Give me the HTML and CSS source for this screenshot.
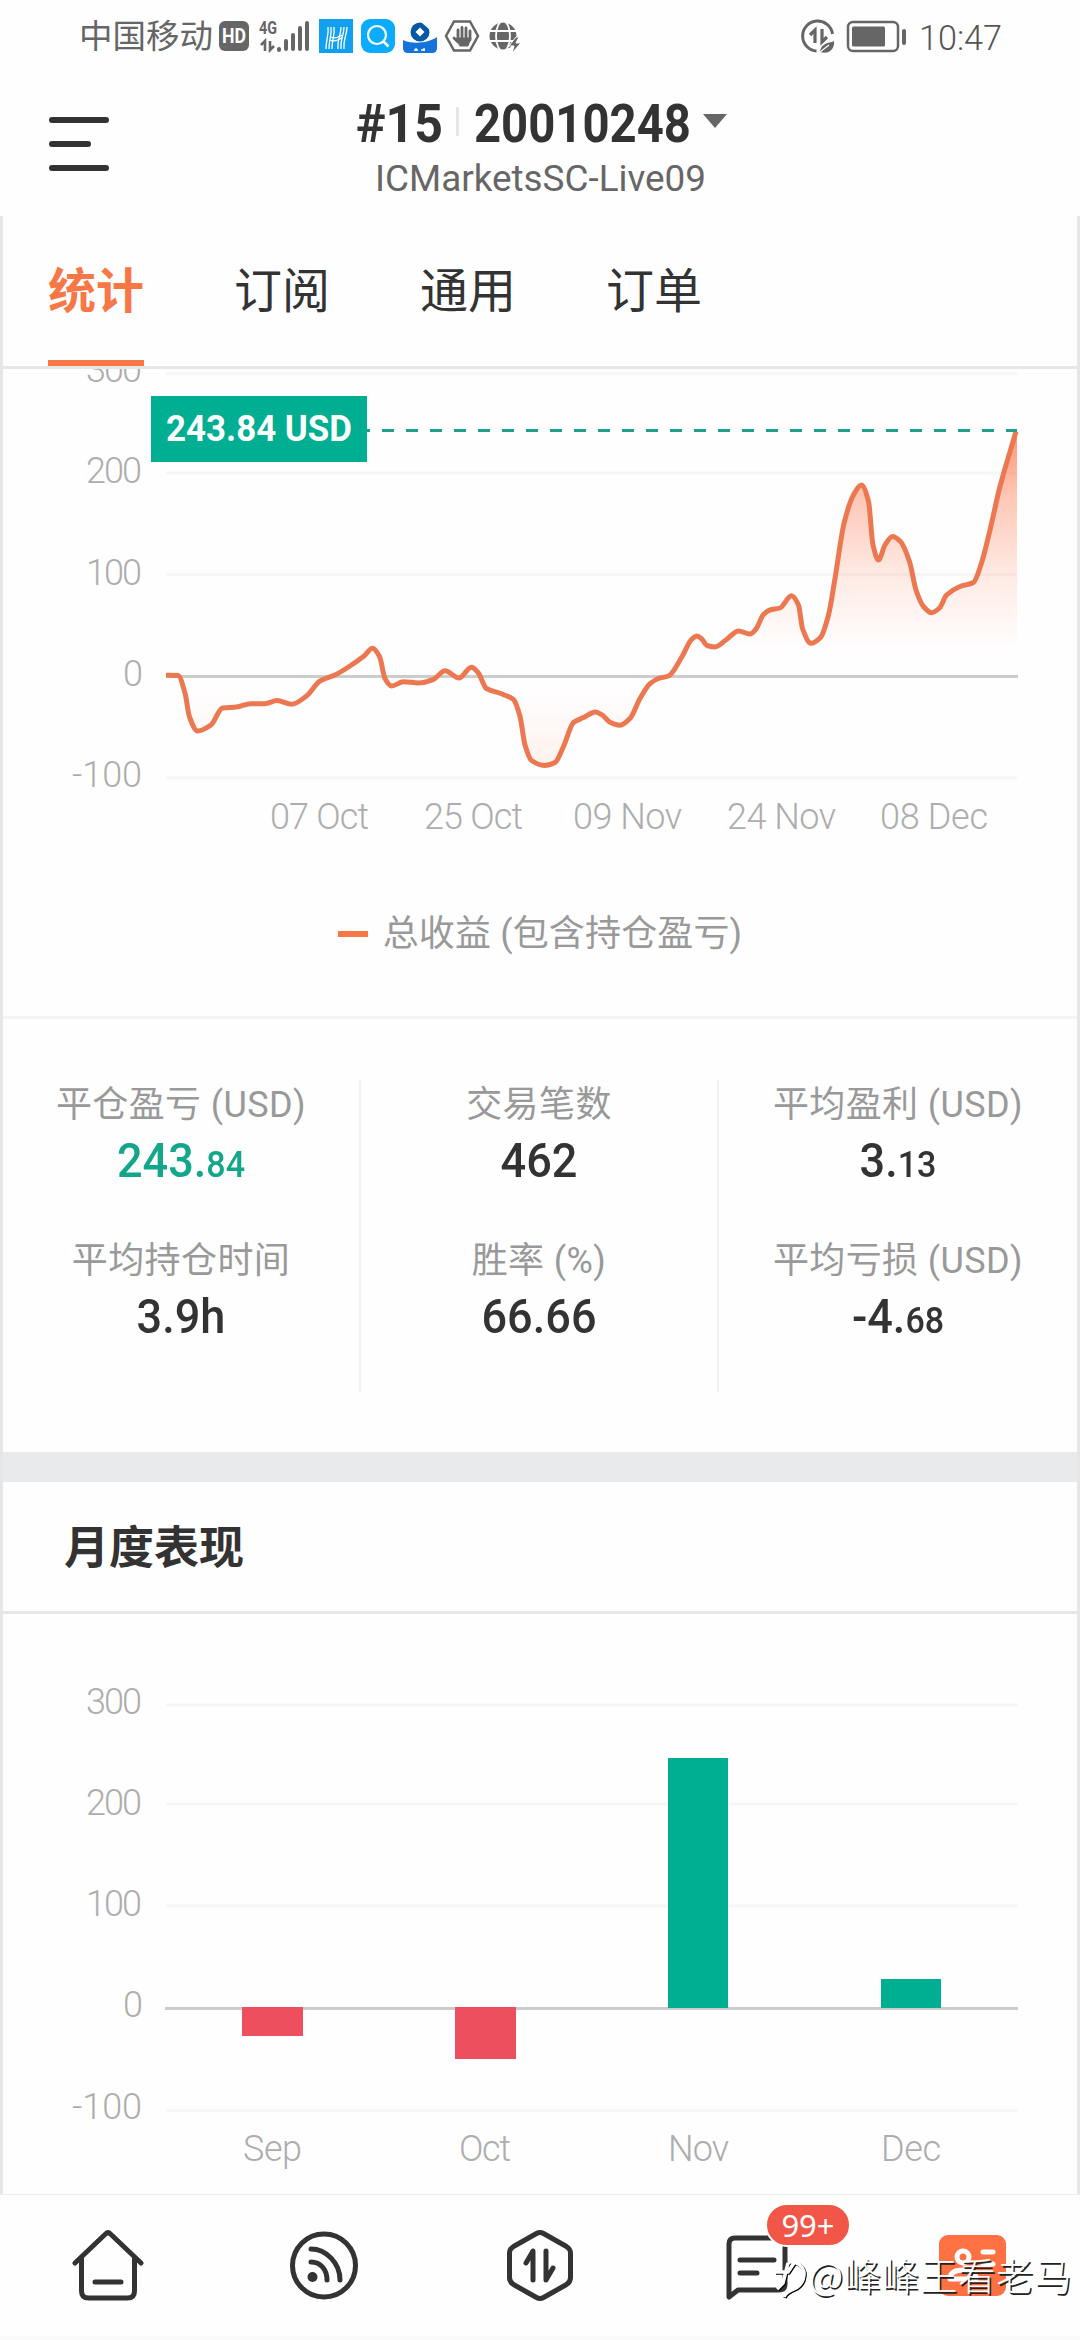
FILE: index.html
```html
<!doctype html>
<html lang="zh-CN">
<head>
    <meta charset="utf-8">
    <title>统计</title>
    <link rel="stylesheet" href="styles.css">
</head>
<body>
    <div class="status">
        <span class="carrier">中国移动</span>
        <svg class="status-icons" width="306" height="40" viewBox="217 17 306 40">
            <!-- HD / 4G / signal -->
            <rect x="219" y="21" width="30" height="30" rx="6" fill="#666"/>
            <text x="222" y="43" class="hd" textLength="24" lengthAdjust="spacingAndGlyphs">HD</text>
            <text x="259" y="34" class="net" textLength="18" lengthAdjust="spacingAndGlyphs">4G</text>
            <path d="M261 45l4-4v10M270 41v9l4-4" fill="none" stroke="#666" stroke-width="2.6"/>
            <path d="M279 50v-1M286 49v-8M293 49V35M300 49V28M307 49V23" stroke="#666" stroke-width="4" stroke-linecap="round"/>
            <!-- app notifications -->
            <rect x="319" y="19" width="34" height="34" fill="#10a0ef"/>
            <g fill="none" stroke="#fff" stroke-width="1.3">
                <path d="M328 27c1 8-2 12-2 22M331 27c1 8-2 12-2 22M334 27c1 8-2 12-2 22M341 27c0 8-4 12-3 22M344 27c0 8-4 12-3 22M347 27c0 8-4 12-3 22"/>
                <path d="M331 37c5 3 7-1 12-2M330 40c6 3 8-1 12-2"/>
            </g>
            <rect x="361" y="19" width="34" height="34" rx="9" fill="#0bacfc"/>
            <circle cx="377" cy="35" r="9" fill="none" stroke="#fff" stroke-width="2.2"/>
            <path d="M383.500 41.500l5 5" stroke="#fff" stroke-width="2.500"/>
            <path d="M403 40c8 4 24 4 34-3v11q0 5-5 5h-24q-5 0-5-5z" fill="#1673dc"/>
            <path d="M414 50h4M416 51v-3M421 50h4M424 51v-3" stroke="#fff" stroke-width="1.300"/>
            <circle cx="420" cy="32" r="9.500" fill="#0759a5"/>
            <path d="M420 27.500l4.500 4.500-4.500 4.500-4.500-4.500z" fill="#fff"/>
            <path d="M422 22l8 7" stroke="#fff" stroke-width="1.500"/>
            <path d="M454 21.500h16l8 14.500-8 14.500h-16L446 36z" fill="none" stroke="#666" stroke-width="2.500"/>
            <g stroke="#666" stroke-width="2.800" stroke-linecap="round">
                <path d="M458 30v10M462 27.500v12M466 28v12M470 31v9M454 38l4 4"/>
                <path d="M457 38h14l-3 8h-8z" fill="#666" stroke-width="1"/>
            </g>
            <circle cx="503" cy="36" r="13.500" fill="#666"/>
            <path d="M489 31h28M489 41h28" stroke="#fff" stroke-width="1.800"/>
            <ellipse cx="503" cy="36" rx="7" ry="15" fill="none" stroke="#fff" stroke-width="1.800"/>
            <path d="M516 37l-7 9h5l-2 7 9-10h-5l3-6z" fill="#666" stroke="#fff" stroke-width="1"/>
        </svg>
        <svg class="status-right" width="108" height="40" viewBox="799 17 108 40">
            <path d="M832.500 34a15 15 0 1 0-16 17" fill="none" stroke="#666" stroke-width="3"/>
            <path d="M810 35l5-5v13M822 29v13l5-5" fill="none" stroke="#666" stroke-width="3.200"/>
            <path d="M834 41c-3 2-13 1-14 11 10 3 15-4 14-11z" fill="#666"/>
            <path d="M820 52l9-7" stroke="#fff" stroke-width="1.200"/>
            <rect x="848" y="22" width="50" height="29" rx="5" fill="none" stroke="#666" stroke-width="2.500"/>
            <rect x="852" y="26.500" width="33" height="20" rx="1.500" fill="#666"/>
            <rect x="902" y="29" width="4" height="16" rx="2" fill="#666"/>
        </svg>
        <svg class="clock" width="90" height="50" viewBox="917 12 90 50">
            <text x="919" y="50" textLength="83" lengthAdjust="spacingAndGlyphs">10:47</text>
        </svg>
    </div>

    <div class="header">
        <div class="menu"><i></i><i></i><i></i></div>
        <svg class="account" width="400" height="110" viewBox="340 90 400 110">
            <text class="rank" x="356" y="142" textLength="87" lengthAdjust="spacingAndGlyphs">#15</text>
            <rect x="456" y="107" width="3" height="29" fill="#e6e6e6"/>
            <text class="rank" x="474" y="142" textLength="217" lengthAdjust="spacingAndGlyphs">20010248</text>
            <path d="M703 114h24l-12 14z" fill="#666"/>
            <text class="server" x="375" y="191" textLength="331" lengthAdjust="spacingAndGlyphs">ICMarketsSC-Live09</text>
        </svg>
    </div>

    <div class="card">
        <div class="tabs">
            <a class="tab active">统计</a>
            <a class="tab">订阅</a>
            <a class="tab">通用</a>
            <a class="tab">订单</a>
        </div>

        <div class="growth">
            <svg class="chart" width="1074" height="479" viewBox="3 369 1074 479">
                <defs>
                    <linearGradient id="fade" gradientUnits="userSpaceOnUse" x1="0" y1="431" x2="0" y2="766">
                        <stop offset="0" stop-color="#ff7043" stop-opacity=".75"/>
                        <stop offset=".2" stop-color="#ff7043" stop-opacity=".38"/>
                        <stop offset=".43" stop-color="#ff7043" stop-opacity=".14"/>
                        <stop offset=".65" stop-color="#ff7043" stop-opacity="0"/>
                        <stop offset=".78" stop-color="#ff7043" stop-opacity="0"/>
                        <stop offset="1" stop-color="#ff7043" stop-opacity=".09"/>
                    </linearGradient>
                </defs>
                <path class="grid" d="M166 373.500h851M166 473h851M166 574.500h851M166 778h851"/>
                <path class="axis" d="M166 676.500h852"/>
                <path id="area" fill="url(#fade)"/>
                <path id="line" class="line"/>
                <path class="current" d="M358 430.500h659"/>
                <rect x="151" y="396" width="216" height="66" fill="#00ae92"/>
                <text class="current-text" x="166" y="441" textLength="186" lengthAdjust="spacingAndGlyphs">243.84 USD</text>
                <g class="ylabels">
                    <text x="86" y="382" textLength="56">300</text>
                    <text x="86" y="483" textLength="56">200</text>
                    <text x="86" y="585" textLength="56">100</text>
                    <text x="123" y="686">0</text>
                    <text x="72" y="787" textLength="70">-100</text>
                </g>
                <g class="xlabels">
                    <text x="270" y="829" textLength="99">07 Oct</text>
                    <text x="424" y="829" textLength="99">25 Oct</text>
                    <text x="573" y="829" textLength="109">09 Nov</text>
                    <text x="727" y="829" textLength="109">24 Nov</text>
                    <text x="880" y="829" textLength="108">08 Dec</text>
                </g>
            </svg>
            <div class="legend"><i></i>总收益 (包含持仓盈亏)</div>
        </div>

        <div class="stats">
            <div class="col">
                <div class="name">平仓盈亏 (USD)</div>
                <div class="value up">243.<small>84</small></div>
                <div class="name">平均持仓时间</div>
                <div class="value">3.9h</div>
            </div>
            <div class="col">
                <div class="name">交易笔数</div>
                <div class="value">462</div>
                <div class="name">胜率 (%)</div>
                <div class="value">66.66</div>
            </div>
            <div class="col">
                <div class="name">平均盈利 (USD)</div>
                <div class="value">3.<small>13</small></div>
                <div class="name">平均亏损 (USD)</div>
                <div class="value">-4.<small>68</small></div>
            </div>
        </div>

        <div class="band"></div>
        <div class="title">月度表现</div>

        <svg class="chart" width="1074" height="580" viewBox="3 1614 1074 580">
            <path class="grid" d="M166 1705h852M166 1804h852M166 1906h852M166 2110.500h852"/>
            <path class="axis" d="M165 2008.500h853"/>
            <g fill="#ed4f5f">
                <rect x="242" y="2007" width="61" height="29"/>
                <rect x="455" y="2007" width="61" height="52"/>
            </g>
            <g fill="#00ae92">
                <rect x="668" y="1758" width="60" height="250"/>
                <rect x="881" y="1979" width="60" height="29"/>
            </g>
            <g class="ylabels">
                <text x="86" y="1714" textLength="56">300</text>
                <text x="86" y="1815" textLength="56">200</text>
                <text x="86" y="1916" textLength="56">100</text>
                <text x="123" y="2017">0</text>
                <text x="72" y="2119" textLength="70">-100</text>
            </g>
            <g class="xlabels">
                <text x="243" y="2161" textLength="59">Sep</text>
                <text x="459" y="2161" textLength="52">Oct</text>
                <text x="668" y="2161" textLength="61">Nov</text>
                <text x="881" y="2161" textLength="60">Dec</text>
            </g>
        </svg>
    </div>

    <div class="nav">
        <a><svg width="76" height="76" viewBox="0 0 76 76">
            <path d="M5 37L35.500 8q2.500-2.500 5 0L71 37M11.500 33v32q0 7 7 7h39q7 0 7-7V33M25 56h26"/>
        </svg></a>
        <a><svg width="76" height="76" viewBox="0 0 76 76">
            <circle cx="38" cy="39.500" r="31.500"/>
            <path d="M25 23c15 0 29 14 29 31M25 36c10 0 16 8 16 18"/>
            <circle class="dot" cx="26.500" cy="51" r="5"/>
        </svg></a>
        <a><svg width="76" height="76" viewBox="0 0 76 76">
            <path d="M34.500 7.500q3.500-2 7 0l23 13q4 2.500 4 7v24q0 4.500-4 7l-23 13q-3.500 2-7 0l-23-13q-4-2.500-4-7v-24q0-4.500 4-7zM24 37l7-12v29M44 25v29l7-12"/>
        </svg></a>
        <a><svg width="76" height="76" viewBox="0 0 76 76">
            <path d="M11 71V18q0-6 6-6h44q6 0 6 6v40q0 6-6 6H20zM22 34h34M22 47h17"/>
        </svg><b class="badge">99+</b></a>
        <a><svg width="76" height="76" viewBox="0 0 76 76">
            <rect class="profile" x="5" y="9" width="67" height="61" rx="9"/>
            <g class="profile-lines">
                <circle cx="29" cy="31" r="6"/>
                <path d="M16 53q0-9 13-9t13 9zM49 26h10M49 38h10"/>
            </g>
        </svg></a>
    </div>

    <div class="watermark">
        <svg width="36" height="50" viewBox="0 0 36 50">
            <path d="M2 21h13l6-9M15 12l-5 20-6 6M16 11q12-1 15 10v3q-1 10-10 14t-10 8"/>
        </svg>
        <span>@峰峰王看老马</span>
    </div>

    <script>
        var points = [
            [166,675.3],[178,675.5],[185,693],[189.5,717],[197.5,731],[211,725],[222.5,708],[236.5,707],
            [250.5,703.7],[265,703.7],[277,700.5],[291.5,704.3],[306.5,696],[320,681],[335,675],[350,666],
            [364,656],[372.5,648.3],[379.5,656.5],[385,678.5],[391.5,686],[403.5,681.7],[418.5,683],
            [433.5,679.3],[445,670.7],[459,678],[471.5,667.3],[478,672.5],[486.5,688.5],[500,693.3],
            [513.5,699.5],[520,716.5],[525,745],[531.5,760.5],[544.5,765.5],[555,762.5],[563.5,746.5],
            [573.5,722.5],[583.5,717.5],[595.5,712],[602,714.8],[610,722.3],[620,725.3],[630,718.5],
            [640,698.5],[650,683.7],[658.5,678.5],[668.5,676],[681.5,657.5],[691.5,639.5],[697,636],
            [701.5,638.7],[707,645.5],[715,647],[726.5,639.5],[738.5,631],[750,634],[756,629],[763.5,614.5],
            [770,610],[780,608],[791.5,595.7],[798.5,605],[802.5,628.5],[811,643.3],[820.5,637.5],
            [828.5,615],[835,578.5],[844,523.5],[853.5,495],[861.5,485],[868.5,501.5],[873,545],[878.5,560],
            [885,545],[892.5,536.5],[900.5,541.5],[909.5,561.5],[916,590],[923.5,606.5],[931.5,612.7],
            [939.5,608],[946.5,595],[960,586.5],[973.5,582.5],[981.5,563],[990,530],[1000,486.5],[1016,431.5]
        ];

        // monotone cubic, so the peaks do not overshoot
        function slope(i) {
            var a = points[i - 1], b = points[i], c = points[i + 1];
            if (!a) return (c[1] - b[1]) / (c[0] - b[0]);
            if (!c) return (b[1] - a[1]) / (b[0] - a[0]);
            var s0 = (b[1] - a[1]) / (b[0] - a[0]);
            var s1 = (c[1] - b[1]) / (c[0] - b[0]);
            return s0 * s1 <= 0 ? 0 : 2 * s0 * s1 / (s0 + s1);
        }

        var d = 'M' + points[0];
        for (var i = 1; i < points.length; i++) {
            var p = points[i - 1], q = points[i];
            var h = (q[0] - p[0]) / 3;
            d += 'C' + [p[0] + h, p[1] + h * slope(i - 1), q[0] - h, q[1] - h * slope(i), q[0], q[1]];
        }
        document.getElementById('line').setAttribute('d', d);
        document.getElementById('area').setAttribute('d', d + 'H1017V676H166Z');
    </script>
</body>
</html>
```
FILE: styles.css
```css
* { margin: 0; padding: 0; box-sizing: border-box; }
body {
    width: 1080px;
    height: 2340px;
    overflow: hidden;
    position: relative;
    display: flex;
    flex-direction: column;
    font-family: Roboto, "Noto Sans CJK SC", sans-serif;
    color: #333;
    background-color: #fefefe;
}
svg { display: block; flex: none; }

.status {
    height: 74px;
    padding: 0 73px 0 79px;
    display: flex;
    align-items: center;
    color: #666;
}
.carrier { width: 138px; font-size: 33.5px; line-height: 40px; white-space: nowrap; }
.status-right { margin-left: auto; }
.clock { margin-left: 10px; }
.clock text { font-size: 35px; font-weight: 300; fill: #555; }
.hd { font-size: 20px; font-weight: 700; fill: #fff; }
.net { font-size: 19px; font-weight: 700; fill: #666; }

.header {
    height: 142px;
    padding: 16px 0 0 49px;
    display: flex;
    align-items: flex-start;
}
.menu {
    width: 60px;
    margin-top: 27px;
    display: flex;
    flex-direction: column;
    gap: 18px;
}
.menu i { height: 6px; border-radius: 3px; background-color: #333; }
.menu i:nth-child(2) { width: 42px; }
.account { margin-left: 231px; }
.rank { font-size: 53px; font-weight: 700; fill: #333; }
.server { font-size: 36px; font-weight: 400; fill: #666; }

.card {
    height: 1978px;
    border: 3px solid #e6e6e6;
    border-width: 0 3px;
}
.tabs {
    height: 153px;
    padding-left: 45px;
    display: flex;
    gap: 90px;
    border-bottom: 3px solid #e6e6e6;
}
.tab {
    height: 150px;
    padding-top: 41px;
    font-size: 48px;
    line-height: 70px;
}
.tab.active {
    font-weight: 700;
    color: #f77747;
    border-bottom: 6px solid #f77747;
}

.growth { height: 650px; border-bottom: 3px solid #f4f4f4; }
.grid { stroke: #f6f6f6; stroke-width: 3; }
.axis { stroke: #ccc; stroke-width: 3; }
.line { fill: none; stroke: #ec7851; stroke-width: 5; stroke-linejoin: round; }
.current { stroke: #219f88; stroke-width: 3; stroke-dasharray: 12 12; }
.current-text { font-size: 36px; font-weight: 700; fill: #fff; }
.ylabels, .xlabels { font-size: 36px; font-weight: 300; fill: #adadad; }
.legend {
    margin-top: 62px;
    display: flex;
    align-items: center;
    justify-content: center;
    font-size: 36px;
    line-height: 48px;
    letter-spacing: .15px;
    color: #999;
}
.legend i { width: 30px; height: 6px; margin-right: 15px; background-color: #f77747; }

.stats {
    height: 433px;
    padding-top: 61px;
    display: flex;
}
.col {
    width: 358px;
    height: 312px;
    text-align: center;
    border-right: 2px solid #f2f2f2;
}
.col:last-child { border-right: 0; }
.name {
    height: 49px;
    font-size: 36px;
    line-height: 50px;
    letter-spacing: .4px;
    color: #999;
}
.value {
    height: 60px;
    margin-bottom: 47px;
    font-size: 49px;
    line-height: 64px;
    font-weight: 500;
    transform: scaleX(.92);
}
.value small { font-size: 37px; }
.up { color: #14a68b; }

.band { height: 30px; background-color: #e9eaec; }
.title {
    height: 132px;
    padding: 34px 0 0 61px;
    font-size: 45px;
    line-height: 66px;
    font-weight: 700;
    border-bottom: 3px solid #e6e6e6;
}

.nav {
    height: 146px;
    display: flex;
    border-top: 1px solid #eee;
    border-bottom: 4px solid #fafafa;
}
.nav a {
    width: 216px;
    padding-top: 31px;
    display: flex;
    justify-content: center;
    position: relative;
}
.nav svg { fill: none; stroke: #333; stroke-width: 5; stroke-linecap: round; stroke-linejoin: round; }
.nav .dot { fill: #333; stroke: none; }
.nav .profile { fill: #ff7043; stroke: none; }
.profile-lines { stroke: #fff; }
.badge {
    position: absolute;
    left: 117px;
    top: 8px;
    width: 86px;
    height: 44px;
    border: 2px solid #fff;
    border-radius: 22px;
    background-color: #f25648;
    color: #fff;
    font: 400 31px/40px "Noto Sans", sans-serif;
    text-align: center;
}

/* account signature, printed over the nav */
.watermark {
    position: absolute;
    left: 773px;
    top: 2249px;
    display: flex;
    color: #fff;
    font: 300 37.5px/50px "Noto Sans CJK SC", sans-serif;
    letter-spacing: .6px;
    text-shadow: 1.500px 1.500px .5px #222;
}
.watermark svg {
    margin-top: 2px;
    fill: none;
    stroke: #fff;
    stroke-width: 3.500;
    filter: drop-shadow(1.500px 1.500px .3px #000);
}
```
